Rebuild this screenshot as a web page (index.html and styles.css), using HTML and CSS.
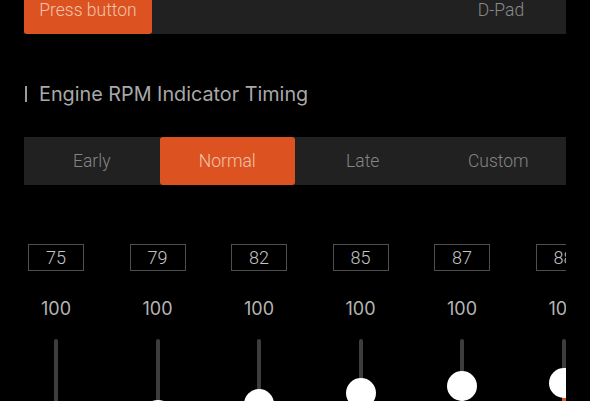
FILE: index.html
```html
<!DOCTYPE html>
<html>
<head>
    <title>RPM Indicator</title>
    <link rel="stylesheet" href="styles.css">
</head>
<body>
    <div class="page">
        <div class="mode-bar">
            <div class="mode-btn active">Press button</div>
            <div class="mode-spacer"></div>
            <div class="mode-btn">D-Pad</div>
        </div>

        <h2 class="section-title">Engine RPM Indicator Timing</h2>

        <div class="segmented">
            <div class="seg">Early</div>
            <div class="seg active">Normal</div>
            <div class="seg">Late</div>
            <div class="seg">Custom</div>
        </div>

        <div class="sliders">
            <div class="slider-col">
                <div class="rpm-box">75</div>
                <div class="max-label">100</div>
                <div class="track"><div class="fill" style="top: 90.6px"></div><div class="thumb" style="top: 75.6px"></div></div>
            </div>
            <div class="slider-col">
                <div class="rpm-box">79</div>
                <div class="max-label">100</div>
                <div class="track"><div class="fill" style="top: 76.1px"></div><div class="thumb" style="top: 61.1px"></div></div>
            </div>
            <div class="slider-col">
                <div class="rpm-box">82</div>
                <div class="max-label">100</div>
                <div class="track"><div class="fill" style="top: 65.3px"></div><div class="thumb" style="top: 50.3px"></div></div>
            </div>
            <div class="slider-col">
                <div class="rpm-box">85</div>
                <div class="max-label">100</div>
                <div class="track"><div class="fill" style="top: 54.4px"></div><div class="thumb" style="top: 39.4px"></div></div>
            </div>
            <div class="slider-col">
                <div class="rpm-box">87</div>
                <div class="max-label">100</div>
                <div class="track"><div class="fill" style="top: 47.1px"></div><div class="thumb" style="top: 32.1px"></div></div>
            </div>
            <div class="slider-col">
                <div class="rpm-box">88</div>
                <div class="max-label">100</div>
                <div class="track"><div class="fill" style="top: 43.5px"></div><div class="thumb" style="top: 28.5px"></div></div>
            </div>
        </div>
    </div>
</body>
</html>
```

FILE: styles.css
```css
html, body {
    margin: 0;
    padding: 0;
    background: #000;
    overflow: hidden;
}

body {
    font-family: Roboto, "Liberation Sans", sans-serif;
}

.page {
    margin-top: -14px;
    padding: 0 24px;
}

/* top mode switch */
.mode-bar {
    display: grid;
    grid-template-columns: 128px 1fr 130px;
    height: 48px;
    background: #212121;
}

.mode-btn {
    display: flex;
    align-items: center;
    justify-content: center;
    font-size: 17.5px;
    font-weight: 300;
    color: #8a8a8a;
    border-radius: 3px;
}

.mode-btn.active {
    background: #dc5321;
    color: #f2c3ae;
}

.section-title {
    margin: 48px 0 31px 0;
    font-family: Inter, "Liberation Sans", sans-serif;
    font-weight: normal;
    font-size: 19.8px;
    line-height: 24px;
    color: #a9a9a9;
    display: flex;
    align-items: center;
}

.section-title::before {
    content: "";
    width: 2px;
    height: 16px;
    margin: 0 12px 0 1px;
    background: #9a9a9a;
}

/* timing selector */
.segmented {
    display: grid;
    grid-template-columns: repeat(4, 1fr);
    height: 48px;
    background: #212121;
}

.seg {
    display: flex;
    align-items: center;
    justify-content: center;
    font-size: 17.5px;
    font-weight: 300;
    color: #858585;
    border-radius: 3px;
}

.seg.active {
    background: #dc5321;
    color: #f2c3ae;
}

/* per-LED sliders */
.sliders {
    display: flex;
    gap: 37.5px;
    margin-top: 59px;
    overflow: hidden;
}

.slider-col {
    flex: 0 0 64px;
    display: flex;
    flex-direction: column;
    align-items: center;
}

.rpm-box {
    width: 54px;
    height: 25px;
    border: 1px solid #4e4e4e;
    text-align: center;
    font-size: 18px;
    font-weight: 300;
    line-height: 25px;
    color: #c4c4c4;
}

.max-label {
    margin-top: 27px;
    font-family: Inter, "Liberation Sans", sans-serif;
    font-size: 18px;
    line-height: 22px;
    color: #b5b5b5;
}

.track {
    position: relative;
    margin-top: 19px;
    width: 4px;
    height: 362px;
    background: #3d3d3d;
    border-radius: 2px;
}

.fill {
    position: absolute;
    left: 0;
    right: 0;
    bottom: 0;
    background: #dc5321;
    border-radius: 2px;
}

.thumb {
    position: absolute;
    left: -13px;
    width: 30px;
    height: 30px;
    border-radius: 50%;
    background: #fff;
}
```
